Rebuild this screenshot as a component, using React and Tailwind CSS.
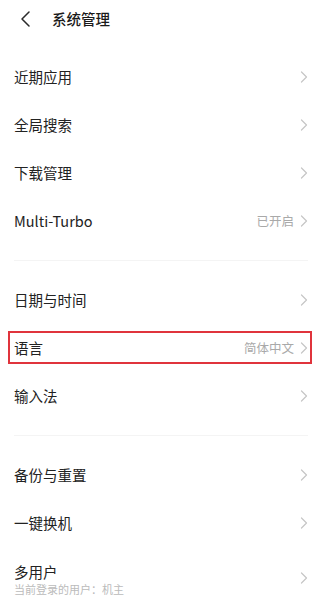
const FONT = { fontFamily: '"Noto Sans CJK SC", "Noto Sans", sans-serif' };

function Chevron() {
  return (
    <svg width="8" height="12" viewBox="0 0 8 12" fill="none" className="shrink-0">
      <path d="M1.5 1L6.5 6L1.5 11" stroke="#c6c6c6" strokeWidth="1.2" strokeLinecap="round" strokeLinejoin="round" />
    </svg>
  );
}

function Row({ label, value, sub, marked }) {
  if (sub) {
    return (
      <div className="relative flex items-start pl-[14px] pr-[14px] h-[56px] pt-[15px]">
        <div className="flex-1 min-w-0">
          <div className="text-[14.5px] leading-[20px] text-[#222]">{label}</div>
          <div className="text-[11px] leading-[15px] text-[#bbbbbb]">{sub}</div>
        </div>
        <div className="mt-[10px]">
          <Chevron />
        </div>
      </div>
    );
  }
  return (
    <div className="relative flex items-center pl-[14px] pr-[14px] h-[48px]">
      <div className="flex-1 min-w-0 text-[14.5px] leading-[20px] text-[#222]">{label}</div>
      {value && <span className="text-[12.5px] text-[#a9a9a9] mr-[6px]">{value}</span>}
      <Chevron />
      {marked && (
        <div className="absolute left-[8px] right-[10px] top-[7px] bottom-[8px] border-2 border-[#e0343c] pointer-events-none" />
      )}
    </div>
  );
}

function Divider() {
  return (
    <div className="py-[15px] px-[14px]">
      <div className="h-px bg-[#f4f4f4]" />
    </div>
  );
}

export default function App() {
  return (
    <div className="w-[322px] h-[600px] overflow-hidden bg-white" style={FONT}>
      <div className="h-[37px] flex items-center">
        <svg width="12" height="16" viewBox="0 0 12 16" fill="none" className="ml-[19px]">
          <path d="M10 1L3 8L10 15" stroke="#2a2a2a" strokeWidth="1.5" strokeLinecap="round" strokeLinejoin="round" />
        </svg>
        <span className="ml-[21px] text-[14.5px] font-medium text-[#1a1a1a]">系统管理</span>
      </div>
      <div className="pt-[16px]">
        <Row label="近期应用" />
        <Row label="全局搜索" />
        <Row label="下载管理" />
        <Row label="Multi-Turbo" value="已开启" />
        <Divider />
        <Row label="日期与时间" />
        <Row label="语言" value="简体中文" marked />
        <Row label="输入法" />
        <Divider />
        <Row label="备份与重置" />
        <Row label="一键换机" />
        <Row label="多用户" sub="当前登录的用户：机主" />
      </div>
    </div>
  );
}
